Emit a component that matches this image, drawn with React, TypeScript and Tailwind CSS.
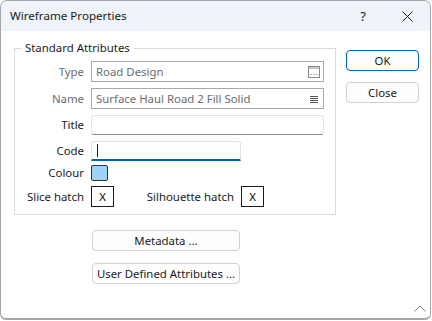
import React from 'react';

const font = "font-['Segoe_UI','Noto_Sans','Liberation_Sans',sans-serif]";

function EllipsisIcon() {
  return (
    <svg width="12" height="12" viewBox="0 0 12 12" className="shrink-0">
      <rect x="0.5" y="0.5" width="11" height="11" fill="none" stroke="#8a8a8a" />
      <line x1="0.5" y1="2" x2="11.5" y2="2" stroke="#8a8a8a" />
      <rect x="2.5" y="8" width="1" height="1" fill="#6a6a6a" />
      <rect x="5.5" y="8" width="1" height="1" fill="#6a6a6a" />
      <rect x="8.5" y="8" width="1" height="1" fill="#6a6a6a" />
    </svg>
  );
}

function ListIcon() {
  return (
    <svg width="8" height="8" viewBox="0 0 8 8" className="shrink-0">
      <line x1="0" y1="1.5" x2="8" y2="1.5" stroke="#555" />
      <line x1="0" y1="3.5" x2="8" y2="3.5" stroke="#555" />
      <line x1="0" y1="5.5" x2="8" y2="5.5" stroke="#555" />
      <line x1="0" y1="7.5" x2="8" y2="7.5" stroke="#555" />
    </svg>
  );
}

function Row({ label, dim, children }: { label: string; dim?: boolean; children: React.ReactNode }) {
  return (
    <div className="flex items-center gap-[7px]">
      <span className={`w-[69px] text-right ${dim ? 'text-[#6d6d6d]' : 'text-[#1a1a1a]'}`}>{label}</span>
      {children}
    </div>
  );
}

function Btn({ children, primary, className = '' }: { children: React.ReactNode; primary?: boolean; className?: string }) {
  return (
    <button
      type="button"
      className={`flex h-[21px] items-center justify-center rounded-[4px] border bg-[#fdfdfd] text-[11.4px] text-[#1a1a1a] ${
        primary ? 'border-[#005fb8]' : 'border-[#d1d1d1]'
      } ${className}`}
    >
      {children}
    </button>
  );
}

export default function App() {
  return (
    <div className={`${font} h-[321px] w-[432px] bg-white text-[11.4px] leading-[16px]`}>
      <div className="flex h-[320px] w-[431px] flex-col overflow-hidden rounded-t-[7px] rounded-b-[6px] border border-b-2 border-[#a5a5a5] bg-white">
        {/* title bar */}
        <div className="flex h-[30px] shrink-0 items-center bg-[#eff3fa] pl-[9px]">
          <span className="text-[11.6px] text-[#1a1a1a]">Wireframe Properties</span>
          <span className="ml-auto mr-[36px] text-[13px] text-[#1a1a1a]">?</span>
          <svg width="11" height="11" viewBox="0 0 11 11" className="mr-[17px]">
            <path d="M0.5 0.5 L10.5 10.5 M10.5 0.5 L0.5 10.5" stroke="#1a1a1a" strokeWidth="1" />
          </svg>
        </div>

        {/* body */}
        <div className="relative flex flex-1 flex-col pl-[13px] pt-[17px]">
          <div className="flex items-start gap-[10px]">
            <div className="relative flex h-[167px] w-[322px] flex-col gap-[6px] border border-[#d9d9d9] pt-[12px]">
              <span className="absolute -top-[9px] left-[6px] bg-white px-[4px] text-[#1a1a1a]">Standard Attributes</span>
              <Row label="Type" dim>
                <div className="flex h-[21px] w-[233px] items-center justify-between border border-[#a9a9a9] pl-[4px] pr-[3px] text-[#6d6d6d]">
                  <span>Road Design</span>
                  <EllipsisIcon />
                </div>
              </Row>
              <Row label="Name" dim>
                <div className="flex h-[21px] w-[233px] items-center justify-between border border-[#a9a9a9] pl-[4px] pr-[5px] text-[#6d6d6d]">
                  <span>Surface Haul Road 2 Fill Solid</span>
                  <ListIcon />
                </div>
              </Row>
              <Row label="Title">
                <div className="h-[20px] w-[233px] rounded-[3px] border border-[#e3e3e3] border-b-[#868686]" />
              </Row>
              <Row label="Code">
                <div className="flex h-[20px] w-[150px] items-center rounded-t-[3px] border border-[#e3e3e3] border-b-2 border-b-[#005fb8] pl-[5px]">
                  <span className="h-[13px] w-px bg-[#1a1a1a]" />
                </div>
              </Row>
              <div className="-mt-[2px] flex items-center gap-[7px]">
                <span className="w-[69px] text-right text-[#1a1a1a]">Colour</span>
                <span className="h-[16px] w-[17px] rounded-[2px] border border-[#333] bg-[#9fd3f6]" />
              </div>
              <div className="-mt-[1px] flex items-center gap-[7px]">
                <span className="w-[69px] text-right text-[#1a1a1a]">Slice hatch</span>
                <span className="flex h-[21px] w-[23px] items-center justify-center border border-[#1a1a1a]">X</span>
                <span className="w-[113px] text-right text-[#1a1a1a]">Silhouette hatch</span>
                <span className="flex h-[21px] w-[23px] items-center justify-center border border-[#1a1a1a]">X</span>
              </div>
            </div>
            <div className="flex flex-col gap-[11px] pt-[2px]">
              <Btn primary className="w-[73px]">OK</Btn>
              <Btn className="w-[73px]">Close</Btn>
            </div>
          </div>

          <div className="ml-[78px] mt-[15px] flex flex-col gap-[12px]">
            <Btn className="w-[148px]">Metadata ...</Btn>
            <Btn className="w-[148px]">User Defined Attributes ...</Btn>
          </div>

          <svg width="12" height="7" viewBox="0 0 12 7" className="absolute bottom-[6px] right-[4px]">
            <path d="M0.5 6.5 L6 1 L11.5 6.5" fill="none" stroke="#7a7a7a" strokeWidth="1" />
          </svg>
        </div>
      </div>
    </div>
  );
}
